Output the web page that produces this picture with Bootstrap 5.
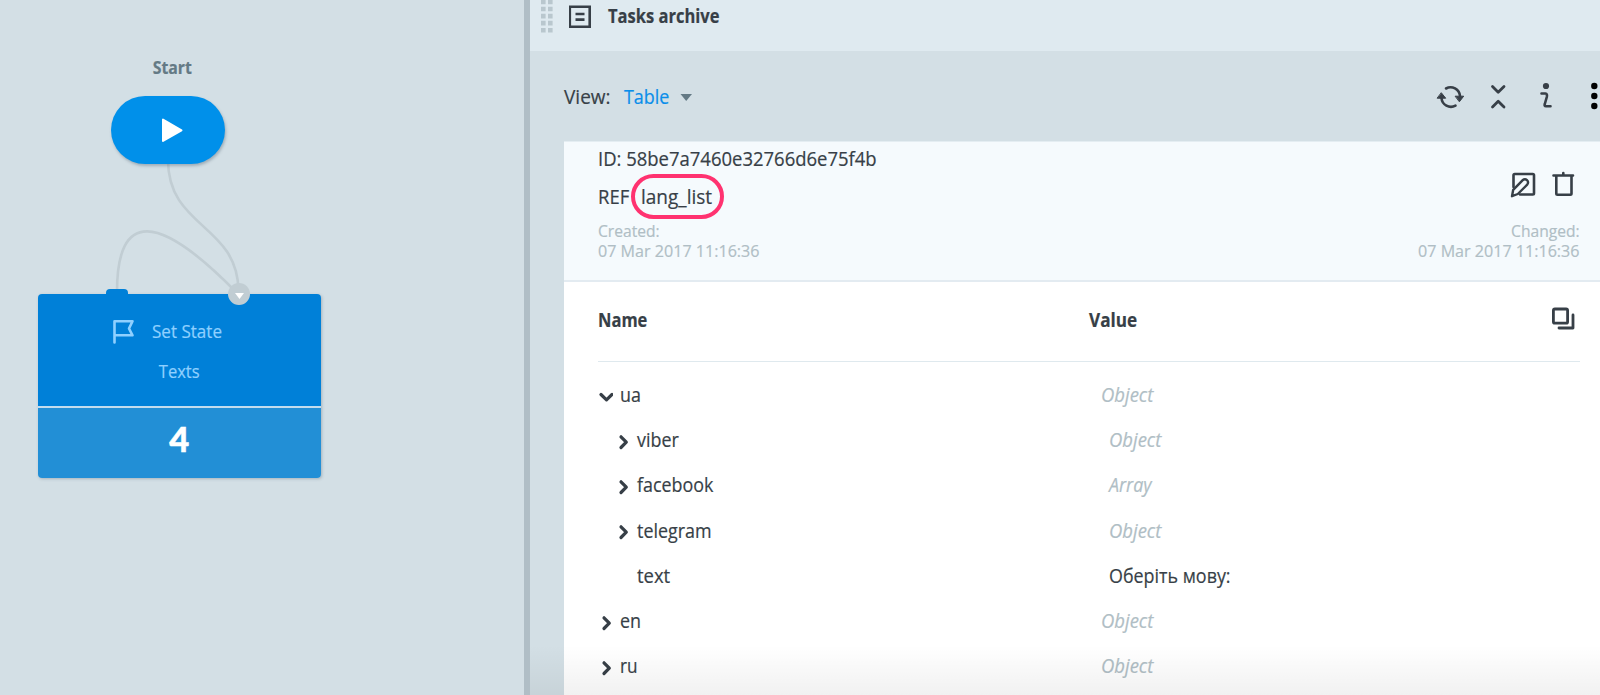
<!DOCTYPE html>
<html lang="en">
<head>
<meta charset="utf-8">
<meta name="viewport" content="width=device-width, initial-scale=1">
<title>Tasks archive</title>
<link href="https://cdn.jsdelivr.net/npm/bootstrap@5.3.0/dist/css/bootstrap.min.css" rel="stylesheet">
<style>
  body{font-family:"Open Sans","Noto Sans",sans-serif;font-size:19.5px;line-height:30px;color:#373f47;background:#d3dfe5;height:695px;white-space:nowrap;-webkit-text-stroke:.2px}
  svg{display:block;flex:none;fill:none;stroke:#373f47;stroke-linecap:round;stroke-linejoin:round}
  /* narrowed lettering */
  .k84,.k88,.k91,.k94,.k97{display:inline-block;transform-origin:0 50%}
  .k84{transform:scaleX(.847)}.k88{transform:scaleX(.88)}.k91{transform:scaleX(.918)}.k94{transform:scaleX(.947)}.k97{transform:scaleX(.975)}
  .text-end .k91,.text-end .k94{transform-origin:100% 50%}
  .text-center .k91,.text-center .k88{transform-origin:50% 50%}
  .canvas{width:524px;flex:none}
  .splitter{width:6px;flex:none;background:#b0bec6}
  .links{left:0;top:0;stroke:#c1cdd3;stroke-width:2.6}
  .node-label{left:111px;top:52px;width:123px;font-size:18px;color:#647a85}
  .node-start{left:111px;top:96px;width:114px;height:68px;background:#0090ea;box-shadow:1px 2px 3px rgba(60,80,100,.35)}
  .node-state{left:37.5px;top:294px;width:283.5px;height:184px;border-radius:4px;box-shadow:1px 1px 3px rgba(60,80,100,.3);color:#8fd0ff;font-size:18px}
  .node-tab{left:68px;top:-5.5px;width:22.5px;height:8px;border-radius:4px 4px 0 0;background:#0080d8}
  .node-port{left:190px;top:-11.5px;width:22.5px;height:22.5px;background:#c1cdd3}
  .node-main{height:112px;background:#0080d8;border-radius:4px 4px 0 0;padding-top:22px}
  .node-count{height:72px;background:#228fd6;border-top:2px solid #c2dcee;border-radius:0 0 4px 4px;font:900 34.5px/62px Lato,sans-serif;color:#fff;-webkit-text-stroke:.5px}
  .panel-title{height:51px;background:#dfeaf0;padding-left:11px}
  .toolbar{height:90px;padding:1px 0 0 34px}
  .pane{margin-left:34px;background:#fff;height:554px}
  .pane-head{height:141px;background:#f5fafd;border-top:1px solid #e4edf2;border-bottom:2px solid #e3ebf1;padding:0 20px 0 34px}
  .meta{font-size:17px;line-height:20px;color:#b0bec5;padding-top:2.4px}
  .ref-ring{left:32.7px;top:0;width:93px;height:45px;border:4.5px solid #ff3270}
  .grid-head{height:80px;line-height:76px;border-bottom:1px solid #dfe9ee;margin:0 20px 0 34px}
  .name-col{width:491px;flex:none}
  .tree{padding:10px 0 0 34px;line-height:45.2px}
  .tree .name-col svg{margin:4px 7px 0 0}
  .lvl-1 .name-col{padding-left:17px}
  .val{padding-left:11.5px}.lvl-1 .val{padding-left:19.5px}
  .kind{color:#b0bec5;font-style:italic}
  .leaf{margin-left:22px}
  .fade-end{left:530px;right:0;bottom:0;height:50px;background:linear-gradient(rgba(0,0,0,0),rgba(0,0,0,.055))}
</style>
</head>
<body class="d-flex overflow-hidden position-relative">
  <section class="canvas position-relative">
    <svg class="links position-absolute" width="524" height="300">
      <path d="M168 160C168 228 237 224 238.500 290"/>
      <path d="M117 292C117 210 158 212 237 293"/>
    </svg>
    <div class="node-label position-absolute text-center fw-bold"><span class="k88">Start</span></div>
    <div class="node-start position-absolute rounded-pill">
      <svg width="114" height="68" style="fill:#fff;stroke:#fff;stroke-width:2"><path d="M52 23.500V45L70.500 34.300Z"/></svg>
    </div>
    <div class="node-state position-absolute">
      <div class="node-tab position-absolute"></div>
      <div class="node-main">
        <div class="d-flex">
          <svg class="ms-0" width="114.500" height="30" style="stroke:#8fd0ff;stroke-width:2.600"><path d="M76.500 26.500V5.300H94.500L91 12.500L94.500 19.300H76.500" /></svg>
          <span class="k94">Set State</span>
        </div>
        <div class="text-center" style="padding-top:9.500px"><span class="k91">Texts</span></div>
      </div>
      <div class="node-count text-center">4</div>
      <div class="node-port position-absolute rounded-circle">
        <svg width="22" height="22" style="fill:#fff;stroke:none"><path d="M7 10H16L11.500 16Z"/></svg>
      </div>
    </div>
  </section>
  <div class="splitter"></div>
  <main class="flex-grow-1">
    <header class="panel-title d-flex align-items-start">
      <svg width="12" height="33" style="stroke:#b9c7ce;stroke-width:4.600;stroke-linecap:butt"><path stroke-dasharray="4.600 2.450" d="M2.300 -.300V33M9.300 -.300V33"/></svg>
      <svg class="ms-3" width="23" height="34" style="stroke-width:2.600;stroke-linejoin:miter;stroke-linecap:butt"><path d="M.800 6.800H20.700V26.800H.800ZM6.500 14H15.500M6.500 19.600H15.500"/></svg>
      <span class="k84 fw-bold" style="margin:1px 0 0 15.500px">Tasks archive</span>
    </header>
    <div class="toolbar d-flex align-items-center">
      <span class="k97">View:</span>
      <a href="#" class="text-decoration-none d-flex align-items-center" style="color:#0a8eea;margin-left:12px"><span class="k91">Table</span>
        <svg style="margin-left:4px;fill:#647a85;stroke:none" width="20" height="20"><path d="M3.500 7H15L9.200 14Z"/></svg></a>
      <svg class="ms-auto" width="170" height="44" style="stroke-width:2.600">
        <path d="M16 13.500A9.500 9.500 0 0 1 30 21M25.500 30.700A9.500 9.500 0 0 1 11.500 23"/>
        <path d="M25.500 21.200H33.700L29.600 26.500ZM7.500 23.200H15.700L11.500 18Z" style="fill:#373f47;stroke-width:1"/>
        <path d="M62.500 11.500L68.200 17.200L74 11.500M62.500 32L68.200 26.300L74 32" style="stroke-width:2.800"/>
        <path d="M111.500 18.500H115.500Q117.500 18.500 116.800 22L114.800 29Q114 31.300 116 31.300H120.500"/>
        <circle cx="116" cy="11" r="3.100" style="fill:#373f47;stroke:none"/>
        <g style="fill:#000;stroke:none"><circle cx="164.300" cy="11" r="3.200"/><circle cx="164.300" cy="21" r="3.200"/><circle cx="164.300" cy="31" r="3.200"/></g>
      </svg>
    </div>
    <article class="pane">
      <div class="pane-head d-flex justify-content-between">
        <div>
          <div style="line-height:34px;height:32px"><span class="k94">ID: 58be7a7460e32766d6e75f4b</span></div>
          <div class="position-relative" style="line-height:45px"><span class="k94">REF</span> <span class="k97" style="margin-left:4.500px">lang_list</span>
            <div class="ref-ring position-absolute rounded-pill"></div></div>
          <div class="meta"><span class="k91">Created:</span><br><span class="k94">07 Mar 2017 11:16:36</span></div>
        </div>
        <div class="text-end d-flex flex-column align-items-end">
          <svg width="72" height="77" style="stroke-width:2.600">
            <path d="M5.500 45V33.200Q5.500 32 6.700 32H24.800Q26 32 26 33.200V51.300Q26 52.500 24.800 52.500H12"/>
            <path d="M4 54.200L5.200 47.800L14.500 38.300Q17 36.400 19 38.200T19.200 42.700L9.800 52Z" style="stroke-width:2.400"/>
            <path d="M45.500 33.500H65M55.300 33V31M48.300 33.500V51.500Q48.300 52.700 49.500 52.700H62.300Q63.500 52.700 63.500 51.500V33.500"/>
          </svg>
          <div class="meta"><span class="k91">Changed:</span><br><span class="k94">07 Mar 2017 11:16:36</span></div>
        </div>
      </div>
      <div class="grid-head d-flex fw-bold">
        <span class="name-col"><span class="k84">Name</span></span><span class="k88">Value</span>
        <svg class="ms-auto" width="30" height="60" style="stroke-width:2.800"><rect x="3.400" y="27" width="14.200" height="14.200" rx="1.500"/><path d="M23 33V46H9"/></svg>
      </div>
      <div class="tree">
        <div class="d-flex"><div class="name-col d-flex align-items-center"><svg width="15" height="16" style="stroke-width:3.200"><path d="M3 5.500L8.500 10.800L14 5.500"/></svg><span class="k91">ua</span></div><div class="val kind"><span class="k94">Object</span></div></div>
        <div class="d-flex lvl-1"><div class="name-col d-flex align-items-center"><svg width="15" height="16" style="stroke-width:3.200"><path d="M6 2.800L11.300 8.200L6 13.500"/></svg><span class="k91">viber</span></div><div class="val kind"><span class="k94">Object</span></div></div>
        <div class="d-flex lvl-1"><div class="name-col d-flex align-items-center"><svg width="15" height="16" style="stroke-width:3.200"><path d="M6 2.800L11.300 8.200L6 13.500"/></svg><span class="k91">facebook</span></div><div class="val kind"><span class="k91">Array</span></div></div>
        <div class="d-flex lvl-1"><div class="name-col d-flex align-items-center"><svg width="15" height="16" style="stroke-width:3.200"><path d="M6 2.800L11.300 8.200L6 13.500"/></svg><span class="k91">telegram</span></div><div class="val kind"><span class="k94">Object</span></div></div>
        <div class="d-flex lvl-1"><div class="name-col"><span class="leaf k94">text</span></div><div class="val"><span class="k91">Оберіть мову:</span></div></div>
        <div class="d-flex"><div class="name-col d-flex align-items-center"><svg width="15" height="16" style="stroke-width:3.200"><path d="M6 2.800L11.300 8.200L6 13.500"/></svg><span class="k91">en</span></div><div class="val kind"><span class="k94">Object</span></div></div>
        <div class="d-flex"><div class="name-col d-flex align-items-center"><svg width="15" height="16" style="stroke-width:3.200"><path d="M6 2.800L11.300 8.200L6 13.500"/></svg><span class="k88">ru</span></div><div class="val kind"><span class="k94">Object</span></div></div>
      </div>
    </article>
  </main>
  <div class="fade-end position-absolute"></div>
<script src="https://cdn.jsdelivr.net/npm/bootstrap@5.3.0/dist/js/bootstrap.bundle.min.js"></script>
</body>
</html>
